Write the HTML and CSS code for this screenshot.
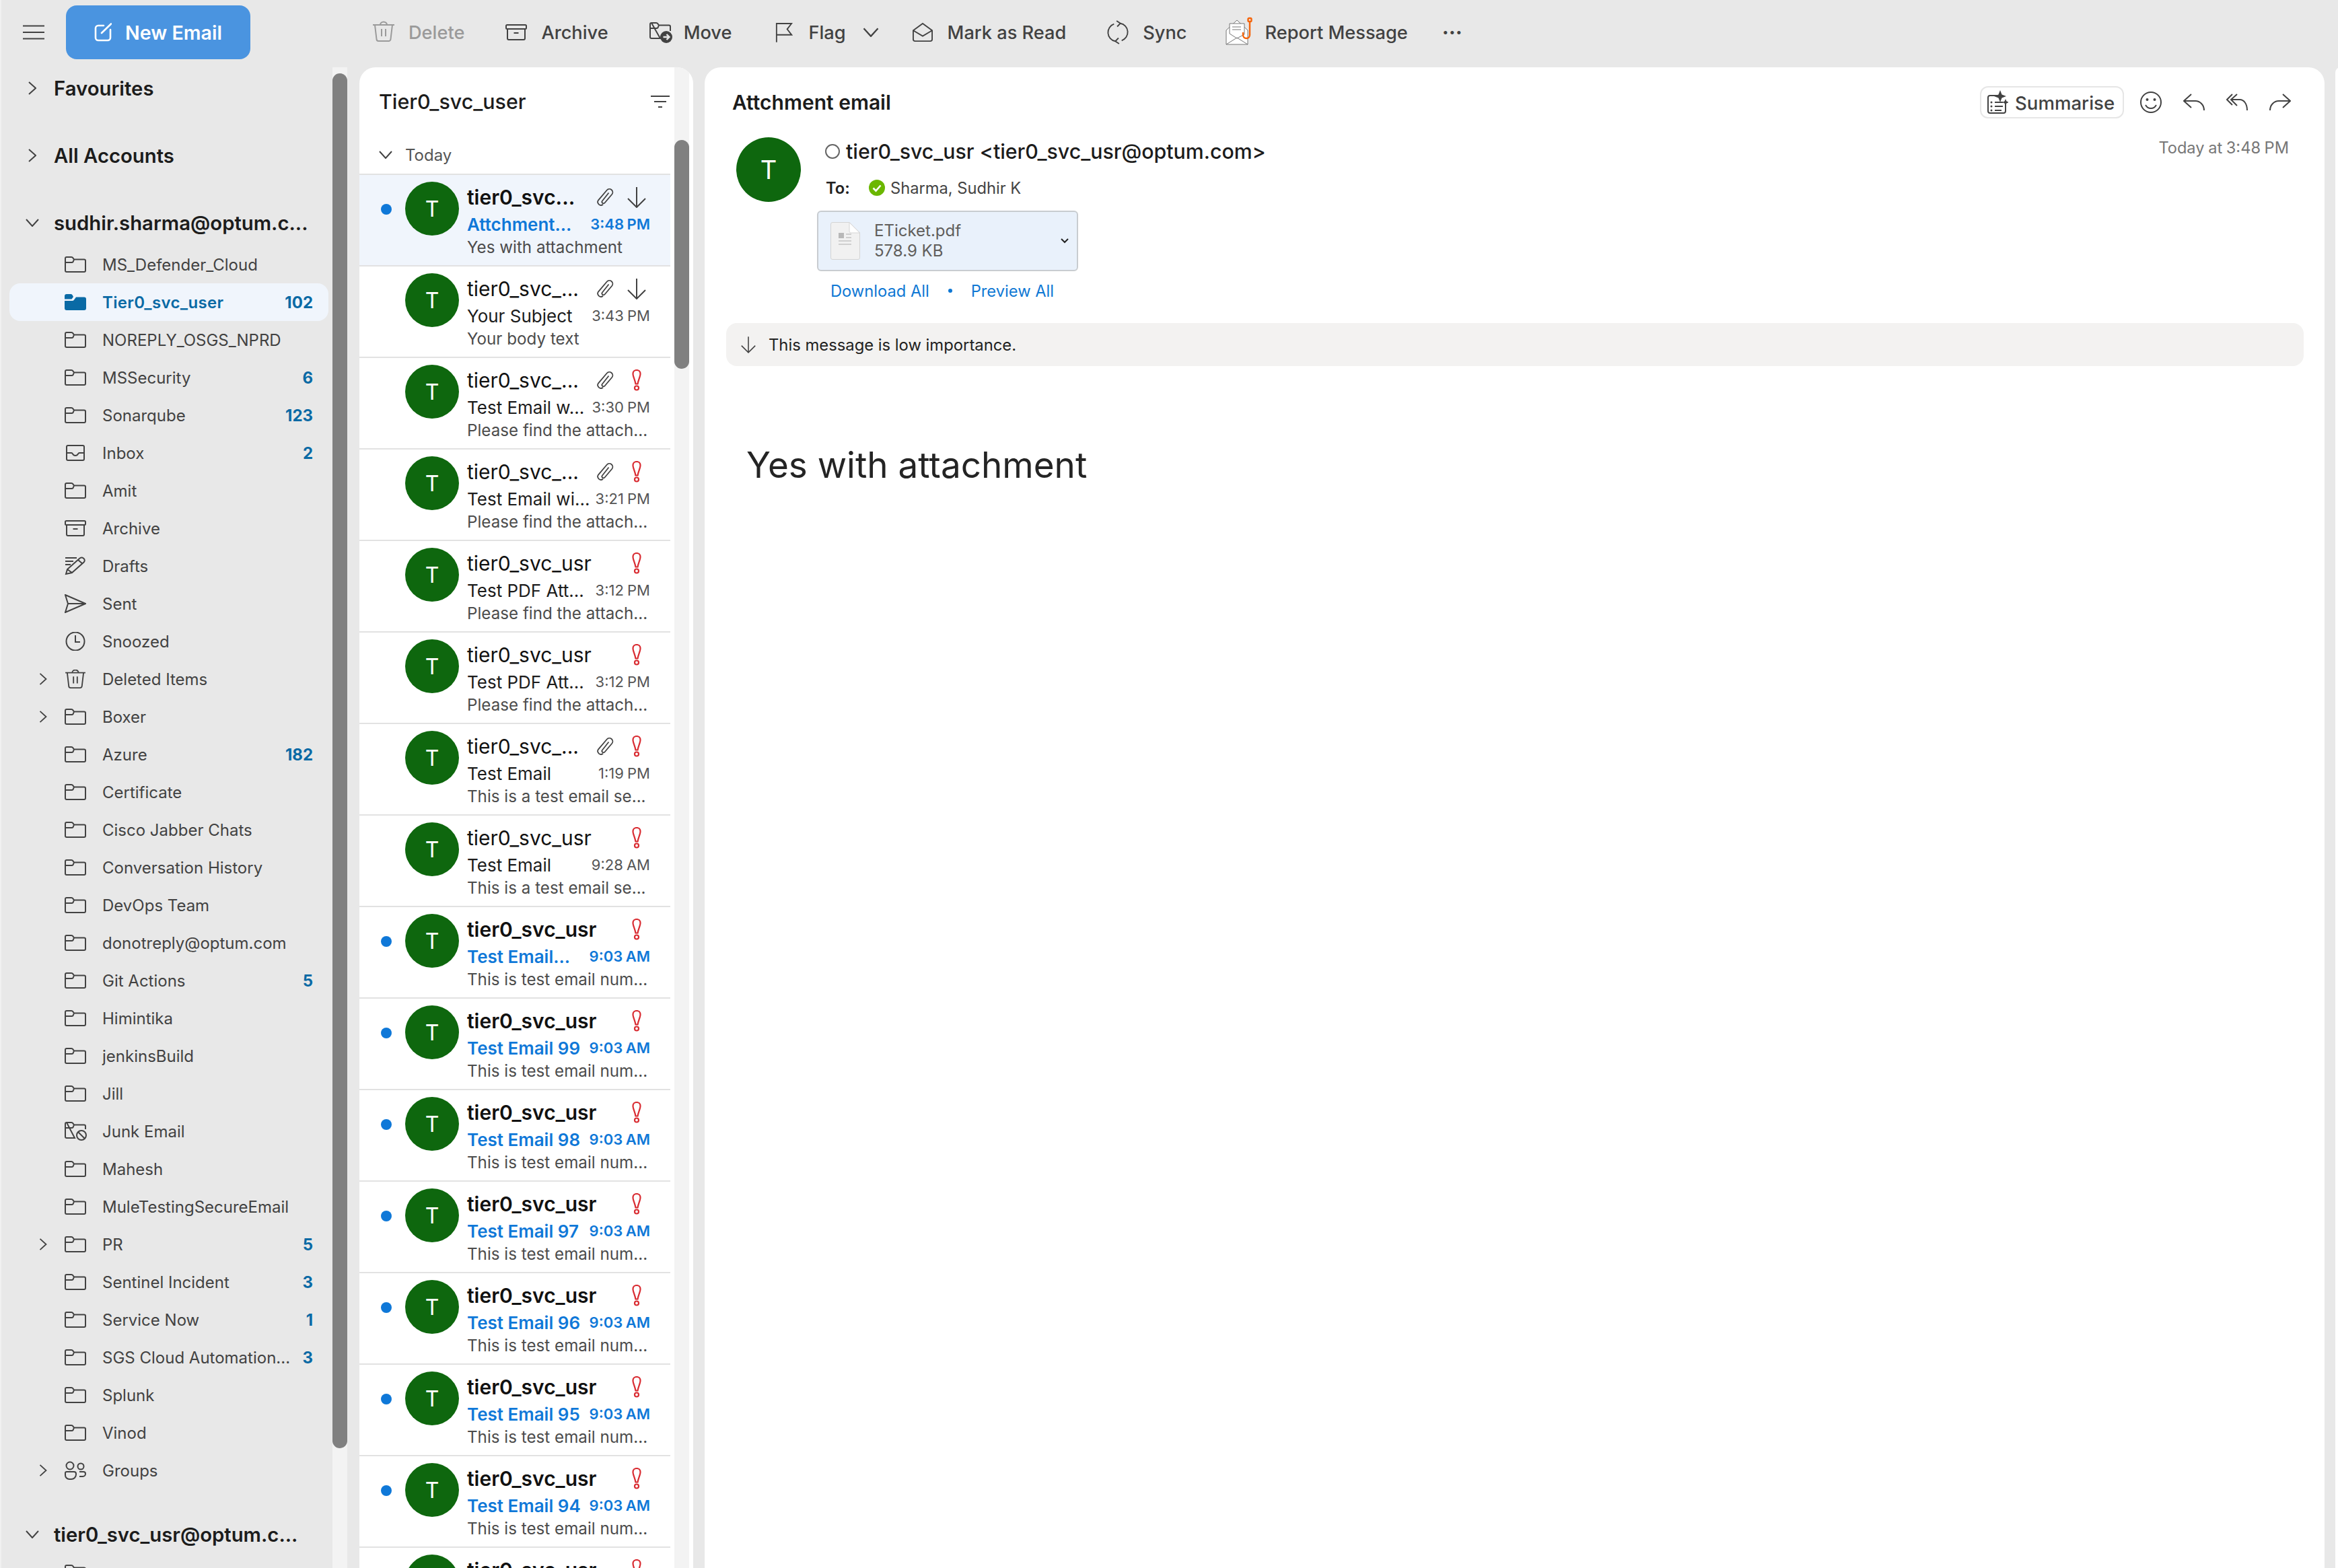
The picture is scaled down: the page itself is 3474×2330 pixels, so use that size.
FILE: index.html
```html
<!DOCTYPE html>
<html lang="en">
<head>
<meta charset="utf-8">
<title>Mail</title>
<link rel="stylesheet" href="styles.css">
</head>
<body>
<svg class="sprite" aria-hidden="true">
  <symbol id="i-folder" viewBox="0 0 32 24"><path d="M3 1h7a3 3 0 0 1 2.5 1.4L14 4.5h15a2 2 0 0 1 2 2V21a2 2 0 0 1-2 2H3a2 2 0 0 1-2-2V3a2 2 0 0 1 2-2zM1 9h9.5a3 3 0 0 0 2.2-1.2L14 4.5"/></symbol>
  <symbol id="i-folder-fill" viewBox="0 0 32 24"><path d="M3 0h6a3 3 0 0 1 2.5 1.300L13 4l-2.500 3.500H0V3a3 3 0 0 1 3-3z"/><path d="M0 10h11.500a3 3 0 0 0 2.400-1.200L17 4.500H29a3 3 0 0 1 3 3V21a3 3 0 0 1-3 3H3a3 3 0 0 1-3-3z"/></symbol>
  <symbol id="i-inbox" viewBox="0 0 32 24"><path d="M5 1h22a2 2 0 0 1 2 2v18a2 2 0 0 1-2 2H5a2 2 0 0 1-2-2V3a2 2 0 0 1 2-2zM3 12h7c1 0 1.500.5 2 1.500.8 1.500 2 2.500 4 2.500s3.200-1 4-2.500c.5-1 1-1.500 2-1.500h7"/></symbol>
  <symbol id="i-archive" viewBox="0 0 32 24"><rect x="1" y="1" width="30" height="6" rx="1.500"/><path d="M3 7v14a2 2 0 0 0 2 2h22a2 2 0 0 0 2-2V7M12.500 13h7"/></symbol>
  <symbol id="i-drafts" viewBox="0 0 32 28"><path d="M1 2h17M1 7h12M1 12h8M2 26l2-7L22 3c1.500-1.500 4-2 6-.5 2.500 2 2 4.500.5 6L11 24zM4 19l7 5M20 5l7 6"/></symbol>
  <symbol id="i-sent" viewBox="0 0 32 28"><path d="M1 1l30 13L1 27l4-13zM5 14h26"/></symbol>
  <symbol id="i-clock" viewBox="0 0 32 28"><circle cx="16" cy="14" r="13.500" /><path d="M16 5v10h7"/></symbol>
  <symbol id="i-trash" viewBox="0 0 32 30"><path d="M0 5h32M3 5l2.500 21a3 3 0 0 0 3 3h15a3 3 0 0 0 3-3L29 5M11 5a5 4.500 0 0 1 10 0M13 11v11M19 11v11"/></symbol>
  <symbol id="i-groups" viewBox="0 0 32 28"><circle cx="8" cy="7" r="5.500"/><circle cx="24" cy="8" r="4.500"/><path d="M3 16h11a3 3 0 0 1 3 3v1a7 7 0 0 1-7 7H7a6 6 0 0 1-6-6v-3a2 2 0 0 1 2-2zM22 16h6a3 3 0 0 1 3 3 4 4 0 0 1-4 4h-5"/></symbol>
  <symbol id="i-right" viewBox="0 0 12 20"><path d="M1 1l10 9-10 9"/></symbol>
  <symbol id="i-down" viewBox="0 0 20 12"><path d="M1 1l9 10 9-10"/></symbol>
  <symbol id="i-clip" viewBox="0 0 26 28"><path d="M18.500 7.500L9 19.500a2.300 2.300 0 0 0 3.500 3L23.300 9.800a4.900 4.900 0 0 0-7.500-6.300L3.200 18.300A4.700 4.700 0 0 0 10 24.700"/></symbol>
  <symbol id="i-arrow" viewBox="0 0 28 32"><path d="M14 1v30M1 18l13 13 13-13"/></symbol>
  <symbol id="i-important" viewBox="0 0 14 32"><path class="red" d="M7 1c3.500 0 5.500 2.500 5.500 5.500 0 4-3 9-4 15h-3c-1-6-4-11-4-15C1.500 3.500 3.500 1 7 1z"/><circle class="red" cx="7" cy="27.500" r="3"/></symbol>
  <symbol id="i-filter" viewBox="0 0 28 20"><path d="M0 2h28M5 10h18M11 18h6"/></symbol>
</svg>

<div class="app">
  <header class="toolbar">
    <svg class="hamburger" viewBox="0 0 32 22"><path d="M0 1.500h32M0 11h32M0 20.500h32"/></svg>
    <button class="new-email">
      <svg class="ico-new" viewBox="0 0 26 28"><path d="M14 4H6a4 4 0 0 0-4 4v14a4 4 0 0 0 4 4h14a4 4 0 0 0 4-4v-12M11 15L25 1.500"/></svg>
      <span>New Email</span>
    </button>
    <nav class="actions">
      <span class="act disabled"><svg class="ico32 ic-trash"><use href="#i-trash"/></svg>Delete</span>
      <span class="act"><svg class="ico32"><use href="#i-archive"/></svg>Archive</span>
      <span class="act act-move">
        <svg class="ico-move" viewBox="0 0 34 32"><path d="M3 2h7a3 3 0 0 1 2.500 1.400L14 5.500h15a2 2 0 0 1 2 2V14M16 25H3a2 2 0 0 1-2-2V4a2 2 0 0 1 2-2zM1 10h9.500a3 3 0 0 0 2.200-1.200L14 5.500"/><circle class="solid" cx="25" cy="23" r="9"/><path class="white" d="M20.500 23h9M25.500 19l4 4-4 4"/></svg>
        Move</span>
      <span class="act act-flag"><svg class="ico-flag" viewBox="0 0 28 32"><path d="M2 32V2h24l-7 9 7 9H2"/></svg>Flag<svg class="ico-chev"><use href="#i-down"/></svg></span>
      <span class="act"><svg class="ico-mail" viewBox="0 0 32 32"><path d="M1 13L16 2l15 11v14a3 3 0 0 1-3 3H4a3 3 0 0 1-3-3zM1 13l15 9 15-9"/></svg>Mark as Read</span>
      <span class="act"><svg class="ico-sync" viewBox="0 0 32 38"><path d="M20 5a14 14 0 0 1 2 27M12 33a14 14 0 0 1-2-27M14 1l6 4-5 5M18 37l-6-4 5-5"/></svg>Sync</span>
      <span class="act act-report">
        <svg class="ico-report" viewBox="0 0 42 42"><path class="thin" fill="#fff" d="M1 20L17 5l16 15v21H1z"/><path class="thin" fill="#fff" d="M6 10h22v16L17 32 6 25z"/><path class="thin" d="M10 15h13M10 19h13M1 41l16-10 16 10"/><path class="hook" d="M36 7v20a5 5 0 0 1-10 0v-4"/><rect class="hook" x="33.500" y="2" width="5" height="5" rx="1.500"/></svg>
        Report Message</span>
      <span class="more">···</span>
    </nav>
  </header>

  <main class="main">
    <aside class="sidebar">
      <div class="tree">
        <div class="account"><svg class="chev"><use href="#i-right"/></svg><span>Favourites</span></div>
        <div class="account"><svg class="chev"><use href="#i-right"/></svg><span>All Accounts</span></div>
        <div class="account open"><svg class="chev-open"><use href="#i-down"/></svg><span>sudhir.sharma@optum.c...</span></div>
        <div class="folder"><span class="tw"></span><svg class="fi"><use href="#i-folder"/></svg><span class="name">MS_Defender_Cloud</span></div>
        <div class="folder active"><span class="tw"></span><svg class="fi"><use href="#i-folder-fill"/></svg><span class="name">Tier0_svc_user</span><b>102</b></div>
        <div class="folder"><span class="tw"></span><svg class="fi"><use href="#i-folder"/></svg><span class="name">NOREPLY_OSGS_NPRD</span></div>
        <div class="folder"><span class="tw"></span><svg class="fi"><use href="#i-folder"/></svg><span class="name">MSSecurity</span><b>6</b></div>
        <div class="folder"><span class="tw"></span><svg class="fi"><use href="#i-folder"/></svg><span class="name">Sonarqube</span><b>123</b></div>
        <div class="folder"><span class="tw"></span><svg class="fi"><use href="#i-inbox"/></svg><span class="name">Inbox</span><b>2</b></div>
        <div class="folder"><span class="tw"></span><svg class="fi"><use href="#i-folder"/></svg><span class="name">Amit</span></div>
        <div class="folder"><span class="tw"></span><svg class="fi"><use href="#i-archive"/></svg><span class="name">Archive</span></div>
        <div class="folder"><span class="tw"></span><svg class="fi tall"><use href="#i-drafts"/></svg><span class="name">Drafts</span></div>
        <div class="folder"><span class="tw"></span><svg class="fi tall"><use href="#i-sent"/></svg><span class="name">Sent</span></div>
        <div class="folder"><span class="tw"></span><svg class="fi tall"><use href="#i-clock"/></svg><span class="name">Snoozed</span></div>
        <div class="folder"><span class="tw"><svg class="twc"><use href="#i-right"/></svg></span><svg class="fi tall"><use href="#i-trash"/></svg><span class="name">Deleted Items</span></div>
        <div class="folder"><span class="tw"><svg class="twc"><use href="#i-right"/></svg></span><svg class="fi"><use href="#i-folder"/></svg><span class="name">Boxer</span></div>
        <div class="folder"><span class="tw"></span><svg class="fi"><use href="#i-folder"/></svg><span class="name">Azure</span><b>182</b></div>
        <div class="folder"><span class="tw"></span><svg class="fi"><use href="#i-folder"/></svg><span class="name">Certificate</span></div>
        <div class="folder"><span class="tw"></span><svg class="fi"><use href="#i-folder"/></svg><span class="name">Cisco Jabber Chats</span></div>
        <div class="folder"><span class="tw"></span><svg class="fi"><use href="#i-folder"/></svg><span class="name">Conversation History</span></div>
        <div class="folder"><span class="tw"></span><svg class="fi"><use href="#i-folder"/></svg><span class="name">DevOps Team</span></div>
        <div class="folder"><span class="tw"></span><svg class="fi"><use href="#i-folder"/></svg><span class="name">donotreply@optum.com</span></div>
        <div class="folder"><span class="tw"></span><svg class="fi"><use href="#i-folder"/></svg><span class="name">Git Actions</span><b>5</b></div>
        <div class="folder"><span class="tw"></span><svg class="fi"><use href="#i-folder"/></svg><span class="name">Himintika</span></div>
        <div class="folder"><span class="tw"></span><svg class="fi"><use href="#i-folder"/></svg><span class="name">jenkinsBuild</span></div>
        <div class="folder"><span class="tw"></span><svg class="fi"><use href="#i-folder"/></svg><span class="name">Jill</span></div>
        <div class="folder"><span class="tw"></span><svg class="fi-junk" viewBox="0 0 34 28"><path d="M3 1h7a3 3 0 0 1 2.500 1.400L14 4.500h15a2 2 0 0 1 2 2V11M15 24H3a2 2 0 0 1-2-2V3a2 2 0 0 1 2-2zM1 9h9.500a3 3 0 0 0 2.200-1.200L14 4.500"/><circle cx="25" cy="20" r="7"/><path d="M20 15l10 10"/></svg><span class="name">Junk Email</span></div>
        <div class="folder"><span class="tw"></span><svg class="fi"><use href="#i-folder"/></svg><span class="name">Mahesh</span></div>
        <div class="folder"><span class="tw"></span><svg class="fi"><use href="#i-folder"/></svg><span class="name">MuleTestingSecureEmail</span></div>
        <div class="folder"><span class="tw"><svg class="twc"><use href="#i-right"/></svg></span><svg class="fi"><use href="#i-folder"/></svg><span class="name">PR</span><b>5</b></div>
        <div class="folder"><span class="tw"></span><svg class="fi"><use href="#i-folder"/></svg><span class="name">Sentinel Incident</span><b>3</b></div>
        <div class="folder"><span class="tw"></span><svg class="fi"><use href="#i-folder"/></svg><span class="name">Service Now</span><b>1</b></div>
        <div class="folder"><span class="tw"></span><svg class="fi"><use href="#i-folder"/></svg><span class="name">SGS Cloud Automation...</span><b>3</b></div>
        <div class="folder"><span class="tw"></span><svg class="fi"><use href="#i-folder"/></svg><span class="name">Splunk</span></div>
        <div class="folder"><span class="tw"></span><svg class="fi"><use href="#i-folder"/></svg><span class="name">Vinod</span></div>
        <div class="folder"><span class="tw"><svg class="twc"><use href="#i-right"/></svg></span><svg class="fi tall"><use href="#i-groups"/></svg><span class="name">Groups</span></div>
        <div class="account second"><svg class="chev-open"><use href="#i-down"/></svg><span>tier0_svc_usr@optum.c...</span></div>
        <div class="folder"><span class="tw"></span><svg class="fi"><use href="#i-folder"/></svg></div>
      </div>
      <div class="track"><div class="thumb thumb-side"></div></div>
    </aside>

    <section class="list-panel">
      <div class="list-col">
        <div class="list-head"><h2>Tier0_svc_user</h2><svg class="ico-filter"><use href="#i-filter"/></svg></div>
        <div class="day"><svg class="chev-day"><use href="#i-down"/></svg>Today</div>

        <article class="msg unread selected"><i class="dot"></i><span class="avatar">T</span><div class="body">
          <div class="line"><span class="sender">tier0_svc...</span><span class="flags"><svg class="clip"><use href="#i-clip"/></svg><svg class="arrow"><use href="#i-arrow"/></svg></span></div>
          <div class="line"><span class="subject">Attchment...</span><time>3:48 PM</time></div>
          <div class="preview">Yes with attachment</div></div></article>

        <article class="msg"><span class="avatar">T</span><div class="body">
          <div class="line"><span class="sender">tier0_svc_...</span><span class="flags"><svg class="clip"><use href="#i-clip"/></svg><svg class="arrow"><use href="#i-arrow"/></svg></span></div>
          <div class="line"><span class="subject">Your Subject</span><time>3:43 PM</time></div>
          <div class="preview">Your body text</div></div></article>

        <article class="msg"><span class="avatar">T</span><div class="body">
          <div class="line"><span class="sender">tier0_svc_...</span><span class="flags"><svg class="clip"><use href="#i-clip"/></svg><svg class="imp"><use href="#i-important"/></svg></span></div>
          <div class="line"><span class="subject">Test Email w...</span><time>3:30 PM</time></div>
          <div class="preview">Please find the attach...</div></div></article>

        <article class="msg"><span class="avatar">T</span><div class="body">
          <div class="line"><span class="sender">tier0_svc_...</span><span class="flags"><svg class="clip"><use href="#i-clip"/></svg><svg class="imp"><use href="#i-important"/></svg></span></div>
          <div class="line"><span class="subject">Test Email wi...</span><time>3:21 PM</time></div>
          <div class="preview">Please find the attach...</div></div></article>

        <article class="msg"><span class="avatar">T</span><div class="body">
          <div class="line"><span class="sender">tier0_svc_usr</span><span class="flags"><svg class="imp"><use href="#i-important"/></svg></span></div>
          <div class="line"><span class="subject">Test PDF Att...</span><time>3:12 PM</time></div>
          <div class="preview">Please find the attach...</div></div></article>

        <article class="msg"><span class="avatar">T</span><div class="body">
          <div class="line"><span class="sender">tier0_svc_usr</span><span class="flags"><svg class="imp"><use href="#i-important"/></svg></span></div>
          <div class="line"><span class="subject">Test PDF Att...</span><time>3:12 PM</time></div>
          <div class="preview">Please find the attach...</div></div></article>

        <article class="msg"><span class="avatar">T</span><div class="body">
          <div class="line"><span class="sender">tier0_svc_...</span><span class="flags"><svg class="clip"><use href="#i-clip"/></svg><svg class="imp"><use href="#i-important"/></svg></span></div>
          <div class="line"><span class="subject">Test Email</span><time>1:19 PM</time></div>
          <div class="preview">This is a test email se...</div></div></article>

        <article class="msg"><span class="avatar">T</span><div class="body">
          <div class="line"><span class="sender">tier0_svc_usr</span><span class="flags"><svg class="imp"><use href="#i-important"/></svg></span></div>
          <div class="line"><span class="subject">Test Email</span><time>9:28 AM</time></div>
          <div class="preview">This is a test email se...</div></div></article>

        <article class="msg unread"><i class="dot"></i><span class="avatar">T</span><div class="body">
          <div class="line"><span class="sender">tier0_svc_usr</span><span class="flags"><svg class="imp"><use href="#i-important"/></svg></span></div>
          <div class="line"><span class="subject">Test Email...</span><time>9:03 AM</time></div>
          <div class="preview">This is test email num...</div></div></article>

        <article class="msg unread"><i class="dot"></i><span class="avatar">T</span><div class="body">
          <div class="line"><span class="sender">tier0_svc_usr</span><span class="flags"><svg class="imp"><use href="#i-important"/></svg></span></div>
          <div class="line"><span class="subject">Test Email 99</span><time>9:03 AM</time></div>
          <div class="preview">This is test email num...</div></div></article>

        <article class="msg unread"><i class="dot"></i><span class="avatar">T</span><div class="body">
          <div class="line"><span class="sender">tier0_svc_usr</span><span class="flags"><svg class="imp"><use href="#i-important"/></svg></span></div>
          <div class="line"><span class="subject">Test Email 98</span><time>9:03 AM</time></div>
          <div class="preview">This is test email num...</div></div></article>

        <article class="msg unread"><i class="dot"></i><span class="avatar">T</span><div class="body">
          <div class="line"><span class="sender">tier0_svc_usr</span><span class="flags"><svg class="imp"><use href="#i-important"/></svg></span></div>
          <div class="line"><span class="subject">Test Email 97</span><time>9:03 AM</time></div>
          <div class="preview">This is test email num...</div></div></article>

        <article class="msg unread"><i class="dot"></i><span class="avatar">T</span><div class="body">
          <div class="line"><span class="sender">tier0_svc_usr</span><span class="flags"><svg class="imp"><use href="#i-important"/></svg></span></div>
          <div class="line"><span class="subject">Test Email 96</span><time>9:03 AM</time></div>
          <div class="preview">This is test email num...</div></div></article>

        <article class="msg unread"><i class="dot"></i><span class="avatar">T</span><div class="body">
          <div class="line"><span class="sender">tier0_svc_usr</span><span class="flags"><svg class="imp"><use href="#i-important"/></svg></span></div>
          <div class="line"><span class="subject">Test Email 95</span><time>9:03 AM</time></div>
          <div class="preview">This is test email num...</div></div></article>

        <article class="msg unread"><i class="dot"></i><span class="avatar">T</span><div class="body">
          <div class="line"><span class="sender">tier0_svc_usr</span><span class="flags"><svg class="imp"><use href="#i-important"/></svg></span></div>
          <div class="line"><span class="subject">Test Email 94</span><time>9:03 AM</time></div>
          <div class="preview">This is test email num...</div></div></article>

        <article class="msg unread"><span class="avatar">T</span><div class="body">
          <div class="line"><span class="sender">tier0_svc_usr</span><span class="flags"><svg class="imp"><use href="#i-important"/></svg></span></div></div></article>
      </div>
      <div class="track track-list"><div class="thumb thumb-list"></div></div>
    </section>

    <section class="read-pane">
      <div class="read-head">
        <h1>Attchment email</h1>
        <div class="read-actions">
          <button class="summarise">
            <svg class="ico-sum" viewBox="0 0 32 36"><path d="M16 8H5a3 3 0 0 0-3 3v20a3 3 0 0 0 3 3h20a3 3 0 0 0 3-3V20M12 18h12M12 24h12M12 30h10"/><circle class="solid" cx="7" cy="18" r="1.500"/><circle class="solid" cx="7" cy="24" r="1.500"/><circle class="solid" cx="7" cy="30" r="1.500"/><path class="solid" d="M20 0l2.500 6.500L29 9l-6.500 2.500L20 18l-2.500-6.500L11 9l6.500-2.500zM28 13l1.500 3.500L33 18l-3.500 1.500L28 23l-1.500-3.500L23 18l3.500-1.500z"/></svg>
            <span>Summarise</span></button>
          <svg class="ico-smile" viewBox="0 0 32 32"><circle cx="16" cy="16" r="15"/><circle class="solid" cx="10.500" cy="12" r="2"/><circle class="solid" cx="21.500" cy="12" r="2"/><path d="M8 20c2 3.500 5 5 8 5s6-1.500 8-5"/></svg>
          <svg class="ico-reply" viewBox="0 0 32 26"><path d="M12 1L1 11l11 10M1 11h17c7 0 13 6 13 14"/></svg>
          <svg class="ico-reply" viewBox="0 0 32 26"><path d="M9 1L1 9l8 8M16 1L7 9l9 9M7 9h13c6 0 11 6 11 16"/></svg>
          <svg class="ico-reply" viewBox="0 0 32 26"><path d="M20 1l11 10-11 10M31 11H14C7 11 1 17 1 25"/></svg>
        </div>
      </div>

      <div class="meta">
        <span class="avatar avatar-lg">T</span>
        <div class="meta-body">
          <div class="from"><i class="presence"></i><span>tier0_svc_usr &lt;tier0_svc_usr@optum.com&gt;</span></div>
          <div class="to"><b>To:</b><svg class="ok" viewBox="0 0 24 24"><circle cx="12" cy="12" r="12"/><path d="M6.500 12.500l4 4 7-8"/></svg><span>Sharma, Sudhir K</span></div>
          <div class="attach">
            <svg class="ico-file" viewBox="0 0 44 56"><path class="doc" d="M3 .5h25l15.500 15.500v37a2.500 2.500 0 0 1-2.500 2.500H3A2.500 2.500 0 0 1 .5 53V3A2.500 2.500 0 0 1 3 .5z"/><path class="fold" d="M28 .5v13a2.500 2.500 0 0 0 2.500 2.500h13z"/><rect class="mark" x="12" y="16" width="8" height="8"/><path class="doc-lines" d="M23 18h8M23 23h8M12 28h19M12 33h19"/></svg>
            <div class="file-text"><div>ETicket.pdf</div><div>578.9 KB</div></div>
            <svg class="ico-attach-chev" viewBox="0 0 12 8"><path d="M1 1l5 5 5-5"/></svg>
          </div>
          <div class="links"><a>Download All</a><i></i><a>Preview All</a></div>
        </div>
        <time class="sent-time">Today at 3:48 PM</time>
      </div>

      <div class="banner"><svg class="ico-low"><use href="#i-arrow"/></svg><span>This message is low importance.</span></div>
      <p class="mail-body">Yes with attachment</p>
    </section>
    <div class="peek"></div>
  </main>
</div>
</body>
</html>
```

FILE: styles.css
```css
* { box-sizing: border-box; }
html, body { margin: 0; padding: 0; }
body {
  width: 3474px;
  height: 2330px;
  overflow: hidden;
  background: #e8e8e8;
  font-family: Inter, "Liberation Sans", sans-serif;
  color: #424242;
}
.sprite { display: none; }
svg { fill: none; stroke: #424242; stroke-width: 2; display: block; flex: none; }
svg .solid { fill: #424242; stroke: none; }
svg .white { stroke: #e8e8e8; stroke-width: 2.4; }
svg .red { stroke: #d92c32; stroke-width: 2.2; }

.app { width: 3474px; height: 2330px; border-left: 2px solid #f1f1f1; display: flex; flex-direction: column; }

/* toolbar */
.toolbar { height: 100px; display: flex; align-items: flex-start; padding-left: 32px; }
.hamburger { width: 32px; height: 22px; margin-top: 37px; }
.new-email {
  width: 274px; height: 80px; margin: 8px 0 0 32px; border: 0; border-radius: 16px;
  background: #4a94e0; color: #fff; font: 600 28.6px Inter, sans-serif;
  display: flex; align-items: center; justify-content: center; gap: 20px;
}
.ico-new { width: 26px; height: 28px; stroke: #fff; stroke-width: 2.6; stroke-linecap: round; }
.actions { display: flex; align-items: center; height: 96px; margin-left: 182px; gap: 61px; font-size: 27.2px; font-weight: 500; }
.act { display: flex; align-items: center; gap: 21px; color: #424242; white-space: nowrap; }
.disabled { color: #9a9a9a; }
.ico32 { width: 32px; height: 28px; }
.ic-trash { stroke: #9a9a9a; height: 32px; margin-top: -2px; }
.ico-move { width: 34px; height: 32px; margin-right: -4px; }
.act-flag { margin-left: 4px; }
.ico-flag { width: 26px; height: 30px; margin-right: 2px; }
.ico-chev { width: 24px; height: 14px; margin-left: 4px; margin-right: -12px; }
.ico-mail { width: 32px; height: 30px; }
.ico-sync { width: 32px; height: 36px; }
.act-report { gap: 17px; margin-left: -4px; }
.ico-report { width: 42px; height: 42px; margin-top: -4px; }
.ico-report .thin { stroke: #777; stroke-width: 1; }
.ico-report .hook { stroke: #f5640a; stroke-width: 2.4; fill: none; }
.more { font-size: 30px; font-weight: 700; letter-spacing: 0; margin-left: -10px; }

/* main columns */
.main { flex: 1; min-height: 0; display: flex; overflow: hidden; }
.sidebar { width: 532px; display: flex; flex: none; }
.tree { width: 492px; padding: 3px 0 0 12px; flex: none; }
.track { width: 22px; flex: none; background: #f3f3f3; padding-top: 9px; }
.thumb { background: #808080; border-radius: 11px; }
.thumb-side { height: 2043px; }

.account { height: 56px; margin-bottom: 44px; display: flex; align-items: center; font-size: 29.3px; font-weight: 600; color: #1c1c1c; white-space: nowrap; }
.account.open { margin-bottom: 6px; }
.account.second { margin-top: 39px; margin-bottom: 1px; }
.chev { width: 12px; height: 20px; margin: 0 26px 0 28px; }
.chev-open { width: 20px; height: 12px; margin: 0 22px 0 24px; }

.folder { width: 474px; height: 56px; padding: 0 23px 0 44px; display: flex; align-items: center; font-size: 24px; border-radius: 16px; white-space: nowrap; }
.folder b { margin-left: auto; color: #0a6aa5; font-weight: 700; }
.tw { width: 38px; flex: none; }
.twc { width: 12px; height: 18px; }
.fi { width: 32px; height: 24px; margin-right: 24px; }
.fi.tall { height: 28px; }
.fi-junk { width: 34px; height: 28px; margin-right: 22px; }
.active { background: #f0f5fc; color: #0a6aa5; font-weight: 600; }
.active .name { letter-spacing: .35px; }
.active .fi { stroke: none; fill: #0a6aa5; }

/* message list */
.list-panel { width: 496px; flex: none; background: #fff; border-radius: 24px 24px 0 0; display: flex; overflow: hidden; padding-right: 6px; }
.list-col { width: 462px; flex: none; }
.track-list { margin-left: 6px; padding-top: 108px; width: 22px; }
.thumb-list { height: 340px; }
.list-head { height: 102px; padding: 0 1px 0 29px; display: flex; align-items: center; justify-content: space-between; }
.list-head h2 { margin: 0; font-size: 30.4px; font-weight: 500; color: #1c1c1c; }
.ico-filter { width: 28px; height: 20px; }
.day { height: 58px; padding-left: 29px; display: flex; align-items: center; font-size: 24px; color: #555; border-bottom: 2px solid #e2e2e2; }
.chev-day { width: 20px; height: 12px; margin-right: 19px; }

.msg { height: 136px; padding: 10px 31px 0 68px; display: flex; border-bottom: 2px solid #e2e2e2; position: relative; }
.selected { background: #f0f5fc; }
.dot { position: absolute; left: 32px; top: 43px; width: 16px; height: 16px; border-radius: 50%; background: #0f78d8; }
.avatar { width: 80px; height: 80px; border-radius: 50%; background: #0e670e; color: #fff; display: flex; align-items: center; justify-content: center; font-size: 32px; flex: none; }
.body { margin: 4px 0 0 12px; flex: 1; min-width: 0; }
.line { display: flex; justify-content: space-between; align-items: center; height: 38px; white-space: nowrap; }
.line + .line { margin-top: 2px; }
.sender { font-size: 30px; color: #111; }
.unread .sender { font-weight: 600; }
.subject { font-size: 26px; color: #1c1c1c; }
.unread .subject { color: #0f78d8; font-weight: 600; }
time { font-size: 22px; color: #555; word-spacing: -1px; }
.line time { margin-right: -1px; }
.unread time { color: #0f78d8; font-weight: 600; }
.preview { height: 32px; line-height: 32px; font-size: 24.2px; color: #4c4c4c; white-space: nowrap; }
.flags { display: flex; align-items: center; gap: 20px; padding-right: 5px; }
.clip { width: 26px; height: 28px; stroke-width: 1.8; }
.arrow { width: 28px; height: 32px; }
.imp { width: 14px; height: 32px; margin: 0 7px; }

/* reading pane */
.read-pane { width: 2407px; flex: none; margin-left: 17px; background: #fff; border-radius: 24px 24px 0 0; display: flex; flex-direction: column; }
.peek { width: 8px; flex: none; margin-left: 16px; background: #fff; border-radius: 24px 0 0 0; }
.read-head { height: 76px; padding: 28px 50px 0 41px; display: flex; justify-content: space-between; align-items: center; }
.read-head h1 { margin: 0; font-size: 30px; font-weight: 600; color: #1c1c1c; }
.read-actions { display: flex; align-items: center; }
.summarise { width: 214px; height: 48px; border: 2px solid #e6e6e6; border-radius: 12px; background: #fff; color: #424242; font: 500 27.6px Inter, sans-serif; display: flex; align-items: center; gap: 10px; padding: 0 0 0 8px; white-space: nowrap; }
.summarise span { margin-top: 2px; }
.ico-sum { width: 32px; height: 36px; }
.ico-smile { width: 32px; height: 32px; margin-left: 24px; }
.ico-reply { width: 32px; height: 26px; margin-left: 32px; }

.meta { display: flex; align-items: flex-start; margin-top: 28px; padding: 0 53px 0 47px; }
.avatar-lg { width: 96px; height: 96px; font-size: 38px; }
.meta-body { margin-left: 36px; flex: 1; }
.from { display: flex; align-items: center; height: 42px; font-size: 30.3px; font-weight: 500; color: #1c1c1c; gap: 9px; }
.presence { width: 22px; height: 22px; border: 2.4px solid #666; border-radius: 50%; }
.to { display: flex; align-items: center; height: 32px; margin-top: 17px; font-size: 23.7px; color: #444; }
.to b { width: 65px; font-weight: 600; color: #222; padding-left: 1px; }
.ok { width: 24px; height: 24px; margin-right: 8px; fill: #6bb700; stroke: none; }
.ok path { fill: none; stroke: #fff; stroke-width: 2.6; }
.attach { width: 388px; height: 90px; margin: 18px 0 0 -12px; background: #e9f1fb; border: 2px solid #c8ccd0; border-radius: 6px; display: flex; align-items: center; padding-left: 18px; }
.ico-file { width: 44px; height: 56px; stroke: none; }
.ico-file .doc { fill: #f1f1f1; stroke: #d4d4d4; stroke-width: 1; }
.ico-file .fold { fill: #fff; stroke: #d4d4d4; stroke-width: 1; }
.ico-file .mark { fill: #b8b8b8; stroke: none; }
.ico-file .doc-lines { stroke: #c4c4c4; stroke-width: 1.6; }
.file-text { margin: -1px 0 0 21px; font-size: 24px; line-height: 30px; color: #605e5c; }
.ico-attach-chev { width: 12px; height: 8px; margin-left: auto; margin-right: 12px; stroke: #222; }
.links { display: flex; align-items: center; height: 32px; margin: 13px 0 0 8px; font-size: 23.7px; color: #0f78d4; }
.links i { width: 6px; height: 6px; border-radius: 50%; background: #0f78d4; margin: 0 28px; }
.sent-time { font-size: 23.6px; line-height: 32px; color: #777; }
.banner { height: 64px; margin: 32px 31px 0 32px; background: #f3f2f1; border-radius: 16px; display: flex; align-items: center; padding-left: 22px; font-size: 23.8px; color: #222; gap: 19px; }
.ico-low { width: 22px; height: 30px; }
.mail-body { margin: 115px 0 0 62px; font-size: 53px; line-height: 64px; color: #242424; }
```
